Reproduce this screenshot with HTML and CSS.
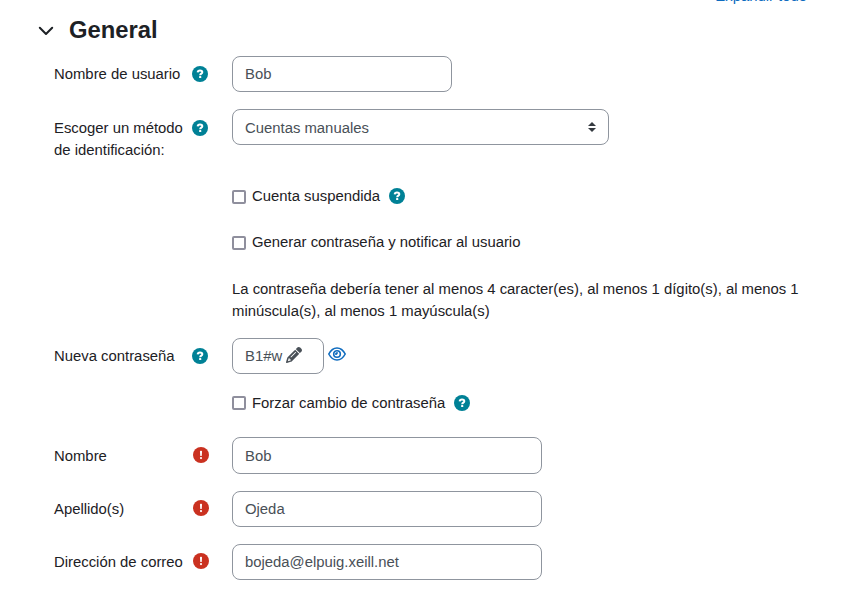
FILE: index.html
```html
<!DOCTYPE html>
<html lang="es">
<head>
<meta charset="utf-8">
<title>General</title>
<link rel="stylesheet" href="styles.css">
</head>
<body>
<svg class="defs" aria-hidden="true">
  <symbol id="help" viewBox="0 0 16 16"><circle cx="8" cy="8" r="8" fill="#008196"/><path d="M5.7 6.3C5.800 5.100 6.800 4.600 8 4.600c1.400 0 2.300.7 2.300 1.700 0 1.400-2.100 1.300-2.100 2.900" fill="none" stroke="#fff" stroke-width="2"/><rect x="7.100" y="10.100" width="2.200" height="2" rx=".6" fill="#fff"/></symbol>
  <symbol id="required" viewBox="0 0 512 512"><circle cx="256" cy="256" r="256" fill="#ca3120"/><path d="M256 122c20 0 34 13 33 30l-8 118c-1 11-11 20-25 20s-24-9-25-20l-8-118c-1-17 13-30 33-30z" fill="#fff"/><circle cx="256" cy="354" r="35" fill="#fff"/></symbol>
</svg>
<main class="form">
  <a class="expand">Expandir todo</a>
  <header class="heading">
    <svg class="chevron" viewBox="0 0 16 10"><path d="M1.8 1.800 8 8l6.200-6.200" fill="none" stroke="#1d2125" stroke-width="2" stroke-linecap="round" stroke-linejoin="round"/></svg>
    <h3>General</h3>
  </header>
  <div class="row user">
    <div class="label"><span>Nombre de usuario</span><svg class="icon"><use href="#help"/></svg></div>
    <div class="field short">Bob</div>
  </div>
  <div class="row method">
    <div class="label"><span>Escoger un método de identificación:</span><svg class="icon"><use href="#help"/></svg></div>
    <div class="field select"><span>Cuentas manuales</span><svg class="arrows" viewBox="0 0 8 10"><path d="M4 0 8 4H0zM4 10 0 6h8z" fill="#343a40"/></svg></div>
  </div>
  <div class="row suspended"><label class="check"><input type="checkbox"><span>Cuenta suspendida</span><svg class="icon"><use href="#help"/></svg></label></div>
  <div class="row generate"><label class="check"><input type="checkbox"><span>Generar contraseña y notificar al usuario</span></label></div>
  <div class="row policy"><p>La contraseña debería tener al menos 4 caracter(es), al menos 1 dígito(s), al menos 1 minúscula(s), al menos 1 mayúscula(s)</p></div>
  <div class="row password">
    <div class="label"><span>Nueva contraseña</span><svg class="icon"><use href="#help"/></svg></div>
    <div class="secret">
      <div class="field code"><span>B1#w</span><svg class="pencil" viewBox="0 0 512 512"><path fill="#495057" d="M410.3 231l11.3-11.3-33.9-33.9-62.1-62.1L291.700 89.800l-11.300 11.300-22.600 22.600L58.600 322.900c-10.400 10.400-18 23.300-22.200 37.400L1 480.700c-2.500 8.400-.2 17.500 6.100 23.700s15.300 8.500 23.700 6.100l120.300-35.400c14.100-4.200 27-11.800 37.400-22.200L387.700 253.700 410.300 231zM160 399.400l-9.100 22.700c-4 3.100-8.500 5.400-13.300 6.900L59.400 452l23-78.100c1.400-4.900 3.800-9.400 6.900-13.300l22.700-9.100v32c0 8.800 7.200 16 16 16h32zM362.700 18.700L348.300 33.200 325.700 55.800 314.300 67.100l33.900 33.900 62.100 62.100 33.900 33.900 11.300-11.300 22.600-22.600 14.500-14.500c25-25 25-65.500 0-90.500L453.300 18.700c-25-25-65.500-25-90.500 0zm-47.400 168l-144 144c-6.200 6.200-16.400 6.200-22.600 0s-6.200-16.400 0-22.600l144-144c6.200-6.200 16.400-6.200 22.600 0s6.200 16.400 0 22.600z"/></svg></div>
      <svg class="eye" viewBox="0 0 18 14" fill="none" stroke="#0f6cbf" stroke-width="1.6"><path d="M.8 7C2.700 3.400 5.600 1 9 1s6.300 2.400 8.200 6C15.300 10.600 12.400 13 9 13S2.700 10.600.8 7z"/><circle cx="9" cy="7" r="3.300"/><path d="M9 5.200A1.800 1.800 0 0 1 7.200 7" stroke-width="2"/></svg>
    </div>
  </div>
  <div class="row force"><label class="check"><input type="checkbox"><span>Forzar cambio de contraseña</span><svg class="icon"><use href="#help"/></svg></label></div>
  <div class="row name">
    <div class="label"><span>Nombre</span><svg class="icon req"><use href="#required"/></svg></div>
    <div class="field">Bob</div>
  </div>
  <div class="row last">
    <div class="label"><span>Apellido(s)</span><svg class="icon req"><use href="#required"/></svg></div>
    <div class="field">Ojeda</div>
  </div>
  <div class="row mail">
    <div class="label"><span>Dirección de correo</span><svg class="icon req"><use href="#required"/></svg></div>
    <div class="field">bojeda@elpuig.xeill.net</div>
  </div>
</main>
</body>
</html>
```
FILE: styles.css
```css
* { box-sizing: border-box; }
body {
  margin: 0;
  height: 597px;
  overflow: hidden;
  background: #fff;
  color: #1d2125;
  font: 14.87px/22px "Liberation Sans", Arial, sans-serif;
}
.defs { display: none; }
svg { flex: none; display: block; }
.form { display: flex; flex-direction: column; }
.expand {
  align-self: flex-end;
  height: 22px;
  margin: -15px 35px 0 0;
  color: #0f6cbf;
}
.heading {
  display: flex;
  align-items: center;
  height: 49px;
  padding: 0 0 4px 38px;
}
.chevron { width: 16px; height: 10px; margin-top: 2px; }
h3 { margin: 0 0 0 15px; font-size: 23.8px; line-height: 28px; }
.row {
  display: grid;
  grid-template-columns: 178px 1fr;
  align-items: start;
  padding-left: 54px;
}
.label {
  display: flex;
  justify-content: space-between;
  padding: 7px 24px 0 0;
}
.label span { width: 134px; margin-right: -4px; }
.icon { width: 16px; height: 16px; margin-top: 3px; }
.icon.req { margin-right: -1px; margin-top: 2px; }
.field {
  display: flex;
  align-items: center;
  width: 310px;
  height: 36px;
  padding: 0 12px;
  border: 1px solid #8f959e;
  border-radius: 8px;
  color: #495057;
}
.short { width: 220px; }
.select { width: 377px; justify-content: space-between; }
.select span { padding-top: 2px; }
.arrows { width: 8px; height: 10px; }
.user { height: 53px; }
.method { height: 76px; }
.method .label { padding-top: 8px; }
.check, .policy p { grid-column: 2; }
.check { display: flex; }
.check input {
  appearance: none;
  width: 14px;
  height: 14px;
  margin: 5px 6px 0 0;
  border: 2px solid #8f8f9d;
  border-radius: 2px;
}
.check .icon { margin-left: 9px; }
.suspended { height: 46px; }
.generate { height: 47px; }
.policy { height: 60px; padding-right: 35px; }
.policy p { margin: 0; }
.password { height: 54px; }
.secret { display: flex; }
.code { width: 92px; }
.pencil { width: 16px; height: 16px; margin: -2px 0 0 4px; }
.eye { width: 18px; height: 14px; margin: 9px 0 0 4px; }
.force { height: 45px; }
.force input { margin-top: 4px; }
.name { height: 54px; }
.name .field { height: 37px; }
.name .label { padding-top: 8px; }
.last { height: 53px; }
```
